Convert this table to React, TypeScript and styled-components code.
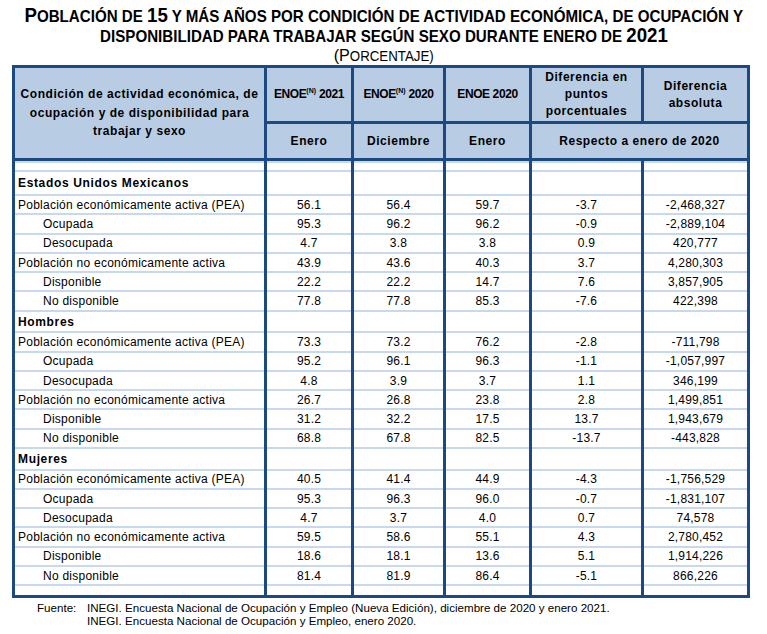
import React from 'react';
import styled, { createGlobalStyle } from 'styled-components';

const DARK = '#1C4A80';
const HEAD = '#B8CCE4';
const LIGHT = '#C6D9F1';

const Global = createGlobalStyle`
  html, body { margin: 0; padding: 0; background: #ffffff; }
  body { font-family: "Liberation Sans", Arial, sans-serif; color: #000; }
`;

const Page = styled.div`
  width: 767px;
  height: 634px;
  box-sizing: border-box;
  padding-top: 7px;
  background: #ffffff;
  overflow: hidden;
`;

const Heading = styled.header`
  display: flex;
  flex-direction: column;
  align-items: center;
  width: 767px;
`;

/* the source uses a narrow face; none is installed, so the line is condensed horizontally */
const TitleLine = styled.h1<{ $scale?: number }>`
  margin: 0;
  display: inline-block;
  height: 20px;
  white-space: nowrap;
  font-family: "Liberation Sans", Arial, sans-serif;
  font-weight: 700;
  font-size: 17px;
  line-height: 20px;
  text-transform: uppercase;
  transform: scaleX(${(p) => p.$scale ?? 0.89});
  transform-origin: center;
`;

const Big = styled.span<{ $size?: number }>`
  font-size: ${(p) => p.$size ?? 21}px;
  line-height: 0;
`;

const Subtitle = styled.div`
  display: inline-block;
  height: 18px;
  white-space: nowrap;
  font-family: "Liberation Sans", Arial, sans-serif;
  font-weight: 400;
  font-size: 14px;
  line-height: 18px;
  text-transform: uppercase;
  transform: scaleX(0.95);
`;

const Table = styled.table`
  margin-left: 12px;
  border-collapse: collapse;
  table-layout: fixed;
  width: 738px;
  border: 3px solid ${DARK};
`;

const HeadRow = styled.tr<{ $h: number }>`
  height: ${(p) => p.$h}px;
`;

const HeadCell = styled.th<{ $tight?: boolean; $lh?: number }>`
  background: ${HEAD};
  border: 3px solid ${DARK};
  padding: 0 2px;
  font-family: "Liberation Sans", Arial, sans-serif;
  font-weight: 700;
  font-size: 12px;
  letter-spacing: ${(p) => (p.$tight ? '-0.4px' : '0.55px')};
  line-height: ${(p) => p.$lh ?? 17}px;
  text-align: center;
  vertical-align: middle;
`;

const Sup = styled.sup`
  font-size: 7px;
  letter-spacing: 0;
  vertical-align: 5px;
  line-height: 0;
`;

const BodyRow = styled.tr<{ $h: number }>`
  height: ${(p) => p.$h}px;
`;

const Cell = styled.td<{ $line?: boolean; $top?: boolean }>`
  border-left: 3px solid ${DARK};
  border-right: 3px solid ${DARK};
  border-bottom: ${(p) => (p.$line === false ? 'none' : `2px solid ${LIGHT}`)};
  box-shadow: ${(p) => (p.$top ? `inset 0 2px 0 ${LIGHT}` : 'none')};
  padding: 0;
  font-size: 12px;
  line-height: 14px;
  letter-spacing: 0.2px;
  text-align: center;
  vertical-align: middle;
  white-space: nowrap;
`;

const Label = styled(Cell)<{ $indent?: boolean; $group?: boolean }>`
  text-align: left;
  padding-left: ${(p) => (p.$indent ? 28 : 3)}px;
  font-weight: ${(p) => (p.$group ? 700 : 400)};
  letter-spacing: ${(p) => (p.$group ? '0.65px' : '0.25px')};
`;

const Footer = styled.div`
  display: grid;
  grid-template-columns: 50px auto;
  padding-left: 37px;
  margin-top: 3px;
  font-size: 11.6px;
  line-height: 13px;
`;

type Row = [string, boolean, string, string, string, string, string];

const groups: { name: string; h: number; rows: Row[] }[] = [
  {
    name: 'Estados Unidos Mexicanos',
    h: 24,
    rows: [
      ['Población económicamente activa (PEA)', false, '56.1', '56.4', '59.7', '-3.7', '-2,468,327'],
      ['Ocupada', true, '95.3', '96.2', '96.2', '-0.9', '-2,889,104'],
      ['Desocupada', true, '4.7', '3.8', '3.8', '0.9', '420,777'],
      ['Población no económicamente activa', false, '43.9', '43.6', '40.3', '3.7', '4,280,303'],
      ['Disponible', true, '22.2', '22.2', '14.7', '7.6', '3,857,905'],
      ['No disponible', true, '77.8', '77.8', '85.3', '-7.6', '422,398'],
    ],
  },
  {
    name: 'Hombres',
    h: 21.5,
    rows: [
      ['Población económicamente activa (PEA)', false, '73.3', '73.2', '76.2', '-2.8', '-711,798'],
      ['Ocupada', true, '95.2', '96.1', '96.3', '-1.1', '-1,057,997'],
      ['Desocupada', true, '4.8', '3.9', '3.7', '1.1', '346,199'],
      ['Población no económicamente activa', false, '26.7', '26.8', '23.8', '2.8', '1,499,851'],
      ['Disponible', true, '31.2', '32.2', '17.5', '13.7', '1,943,679'],
      ['No disponible', true, '68.8', '67.8', '82.5', '-13.7', '-443,828'],
    ],
  },
  {
    name: 'Mujeres',
    h: 21.5,
    rows: [
      ['Población económicamente activa (PEA)', false, '40.5', '41.4', '44.9', '-4.3', '-1,756,529'],
      ['Ocupada', true, '95.3', '96.3', '96.0', '-0.7', '-1,831,107'],
      ['Desocupada', true, '4.7', '3.7', '4.0', '0.7', '74,578'],
      ['Población no económicamente activa', false, '59.5', '58.6', '55.1', '4.3', '2,780,452'],
      ['Disponible', true, '18.6', '18.1', '13.6', '5.1', '1,914,226'],
      ['No disponible', true, '81.4', '81.9', '86.4', '-5.1', '866,226'],
    ],
  },
];

const widths = [252, 87, 92, 86, 112, 106];

const EmptyRow = ({ h, top, line }: { h: number; top?: boolean; line?: boolean }) => (
  <BodyRow $h={h}>
    {widths.map((_, i) => (
      <Cell key={i} $top={top} $line={line} />
    ))}
  </BodyRow>
);

export default function App() {
  return (
    <Page>
      <Global />
      <Heading>
        <TitleLine>
          <Big>P</Big>oblación de <Big>15</Big> y más años por condición de actividad económica, de ocupación y
        </TitleLine>
        <TitleLine>
          disponibilidad para trabajar según sexo durante enero de <Big>2021</Big>
        </TitleLine>
        <Subtitle>
          <Big $size={17}>(P</Big>orcentaje)
        </Subtitle>
      </Heading>
      <Table>
        <colgroup>
          {widths.map((w, i) => (
            <col key={i} style={{ width: w }} />
          ))}
        </colgroup>
        <thead>
          <HeadRow $h={56}>
            <HeadCell rowSpan={2} $lh={18.5}>
              Condición de actividad económica, de ocupación y de disponibilidad para trabajar y sexo
            </HeadCell>
            <HeadCell $tight>
              ENOE<Sup>(N)</Sup> 2021
            </HeadCell>
            <HeadCell $tight>
              ENOE<Sup>(N)</Sup> 2020
            </HeadCell>
            <HeadCell $tight>ENOE 2020</HeadCell>
            <HeadCell>
              Diferencia en
              <br />
              puntos
              <br />
              porcentuales
            </HeadCell>
            <HeadCell>
              Diferencia
              <br />
              absoluta
            </HeadCell>
          </HeadRow>
          <HeadRow $h={37}>
            <HeadCell>Enero</HeadCell>
            <HeadCell>Diciembre</HeadCell>
            <HeadCell>Enero</HeadCell>
            <HeadCell colSpan={2}>Respecto a enero de 2020</HeadCell>
          </HeadRow>
        </thead>
        <tbody>
          <EmptyRow h={11.5} top />
          {groups.map((g) => (
            <React.Fragment key={g.name}>
              <BodyRow $h={g.h}>
                <Label $group>{g.name}</Label>
                {widths.slice(1).map((_, i) => (
                  <Cell key={i} />
                ))}
              </BodyRow>
              {g.rows.map((r, i) => (
                <BodyRow key={i} $h={19.3}>
                  <Label $indent={r[1]}>{r[0]}</Label>
                  {r.slice(2).map((v, j) => (
                    <Cell key={j}>{v}</Cell>
                  ))}
                </BodyRow>
              ))}
            </React.Fragment>
          ))}
          <EmptyRow h={11} line={false} />
        </tbody>
      </Table>
      <Footer>
        <span>Fuente:</span>
        <span>INEGI. Encuesta Nacional de Ocupación y Empleo (Nueva Edición), diciembre de 2020 y enero 2021.</span>
        <span />
        <span>INEGI. Encuesta Nacional de Ocupación y Empleo, enero 2020.</span>
      </Footer>
    </Page>
  );
}
